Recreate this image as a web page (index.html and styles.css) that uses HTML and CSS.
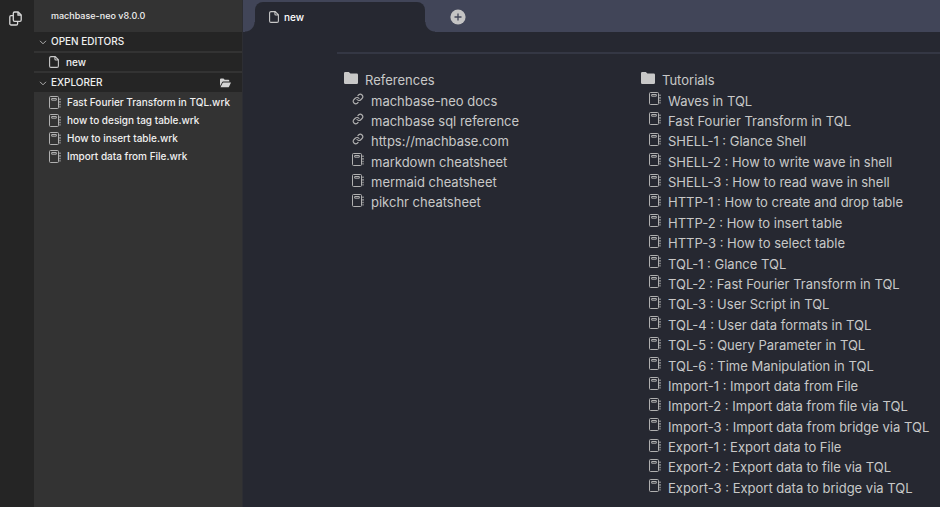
FILE: index.html
```
<!DOCTYPE html>
<html lang="en">
<head>
<meta charset="utf-8">
<meta name="viewport" content="width=device-width, initial-scale=1">
<title>machbase-neo</title>
<link rel="stylesheet" href="styles.css">
</head>
<body>
<svg class="sprite" aria-hidden="true">
  <symbol id="book" viewBox="0 0 12 13"><path d="M1.500.5h7a1 1 0 0 1 1 1v10a1 1 0 0 1-1 1h-7a1 1 0 0 1-1-1v-10a1 1 0 0 1 1-1zM2.700 2.500h4.600v1.700H2.700z" fill="none" stroke="currentColor"/><path d="M11 2.500v9" fill="none" stroke="currentColor" stroke-width="1.200" stroke-dasharray="1.600 1"/></symbol>
  <symbol id="file" viewBox="0 0 10 12"><path d="M2 .6h4.200l3.200 3.200V10a1.400 1.400 0 0 1-1.400 1.400H2A1.400 1.400 0 0 1 .6 10V2A1.400 1.400 0 0 1 2 .6zM5.900.8V3a1 1 0 0 0 1 1h2.300" fill="none" stroke="currentColor" stroke-width="1.100"/></symbol>
  <symbol id="link" viewBox="0 0 24 24"><path d="M10 13a5 5 0 0 0 7.500.5l3-3a5 5 0 0 0-7-7l-1.700 1.700M14 11a5 5 0 0 0-7.500-.5l-3 3a5 5 0 0 0 7 7l1.700-1.700" fill="none" stroke="currentColor" stroke-width="2.300" stroke-linecap="round"/></symbol>
  <symbol id="folder" viewBox="0 0 14 12"><path d="M1.300 0h3.500l1.600 1.500h6.300A1.300 1.300 0 0 1 14 2.800v7.900a1.300 1.300 0 0 1-1.300 1.300H1.300A1.300 1.300 0 0 1 0 10.700V1.300A1.300 1.300 0 0 1 1.300 0z" fill="currentColor"/></symbol>
  <symbol id="chevron" viewBox="0 0 8 5"><path d="M1 .8l3 3 3-3" fill="none" stroke="currentColor"/></symbol>
</svg>
<div class="app">
  <nav class="rail" aria-label="Activity">
    <button class="rail-button" type="button" aria-label="Explorer">
      <svg width="13" height="15" viewBox="0 0 13 15" fill="none" stroke="currentColor" stroke-width="1.300" stroke-linejoin="round"><path d="M5.600 1h3.600l3 3v5a1.300 1.300 0 0 1-1.300 1.300H5.600A1.300 1.300 0 0 1 4.300 9V2.300A1.300 1.300 0 0 1 5.600 1zM9 1v3.200h3.200M4.300 4.700H2A1.200 1.200 0 0 0 .8 5.900v6.800A1.300 1.300 0 0 0 2.100 14h5.200a1.300 1.300 0 0 0 1.300-1.300v-2.400"/></svg>
    </button>
  </nav>
  <aside class="sidebar">
    <div class="product">machbase-neo v8.0.0</div>
    <div class="section">
      <button class="section-title" type="button"><svg class="chevron"><use href="#chevron"/></svg>OPEN EDITORS</button>
    </div>
    <a class="open-file" href="#new"><svg class="file-icon"><use href="#file"/></svg>new</a>
    <div class="section">
      <button class="section-title" type="button"><svg class="chevron"><use href="#chevron"/></svg>EXPLORER</button>
      <button class="section-action" type="button" aria-label="Open folder">
        <svg width="11" height="10" viewBox="0 0 11 10" fill="currentColor"><path d="M0 8V1.500A1 1 0 0 1 1 .6h2.500l1.200 1.200h3.600a1 1 0 0 1 1 1v.8H3.200a1.400 1.400 0 0 0-1.200.8zM.5 9.300l2.100-4.200a1 1 0 0 1 .8-.5H11L9 8.700a1 1 0 0 1-.9.6z"/></svg>
      </button>
    </div>
    <ul class="files">
      <li><a href="#f1"><svg class="book"><use href="#book"/></svg>Fast Fourier Transform in TQL.wrk</a></li>
      <li><a href="#f2"><svg class="book"><use href="#book"/></svg>how to design tag table.wrk</a></li>
      <li><a href="#f3"><svg class="book"><use href="#book"/></svg>How to insert table.wrk</a></li>
      <li><a href="#f4"><svg class="book"><use href="#book"/></svg>Import data from File.wrk</a></li>
    </ul>
  </aside>
  <main class="main">
    <div class="tabs">
      <button class="tab" type="button"><svg class="file-icon"><use href="#file"/></svg>new</button>
      <button class="add" type="button" aria-label="New tab">
        <svg width="16" height="16" viewBox="0 0 16 16"><circle cx="8" cy="8" r="7.600" fill="#c4c4c4"/><path d="M8 4.500v7M4.500 8h7" stroke="#414558" stroke-width="1.300"/></svg>
      </button>
    </div>
    <div class="content">
      <section class="group">
        <h2><svg class="folder"><use href="#folder"/></svg>References</h2>
        <a href="#r1"><svg class="link"><use href="#link"/></svg>machbase-neo docs</a>
        <a href="#r2"><svg class="link"><use href="#link"/></svg>machbase sql reference</a>
        <a href="#r3"><svg class="link"><use href="#link"/></svg>https://machbase.com</a>
        <a href="#r4"><svg class="book"><use href="#book"/></svg>markdown cheatsheet</a>
        <a href="#r5"><svg class="book"><use href="#book"/></svg>mermaid cheatsheet</a>
        <a href="#r6"><svg class="book"><use href="#book"/></svg>pikchr cheatsheet</a>
      </section>
      <section class="group">
        <h2><svg class="folder"><use href="#folder"/></svg>Tutorials</h2>
        <a href="#t1"><svg class="book"><use href="#book"/></svg>Waves in TQL</a>
        <a href="#t2"><svg class="book"><use href="#book"/></svg>Fast Fourier Transform in TQL</a>
        <a href="#t3"><svg class="book"><use href="#book"/></svg>SHELL-1 : Glance Shell</a>
        <a href="#t4"><svg class="book"><use href="#book"/></svg>SHELL-2 : How to write wave in shell</a>
        <a href="#t5"><svg class="book"><use href="#book"/></svg>SHELL-3 : How to read wave in shell</a>
        <a href="#t6"><svg class="book"><use href="#book"/></svg>HTTP-1 : How to create and drop table</a>
        <a href="#t7"><svg class="book"><use href="#book"/></svg>HTTP-2 : How to insert table</a>
        <a href="#t8"><svg class="book"><use href="#book"/></svg>HTTP-3 : How to select table</a>
        <a href="#t9"><svg class="book"><use href="#book"/></svg>TQL-1 : Glance TQL</a>
        <a href="#t10"><svg class="book"><use href="#book"/></svg>TQL-2 : Fast Fourier Transform in TQL</a>
        <a href="#t11"><svg class="book"><use href="#book"/></svg>TQL-3 : User Script in TQL</a>
        <a href="#t12"><svg class="book"><use href="#book"/></svg>TQL-4 : User data formats in TQL</a>
        <a href="#t13"><svg class="book"><use href="#book"/></svg>TQL-5 : Query Parameter in TQL</a>
        <a href="#t14"><svg class="book"><use href="#book"/></svg>TQL-6 : Time Manipulation in TQL</a>
        <a href="#t15"><svg class="book"><use href="#book"/></svg>Import-1 : Import data from File</a>
        <a href="#t16"><svg class="book"><use href="#book"/></svg>Import-2 : Import data from file via TQL</a>
        <a href="#t17"><svg class="book"><use href="#book"/></svg>Import-3 : Import data from bridge via TQL</a>
        <a href="#t18"><svg class="book"><use href="#book"/></svg>Export-1 : Export data to File</a>
        <a href="#t19"><svg class="book"><use href="#book"/></svg>Export-2 : Export data to file via TQL</a>
        <a href="#t20"><svg class="book"><use href="#book"/></svg>Export-3 : Export data to bridge via TQL</a>
      </section>
    </div>
  </main>
</div>
</body>
</html>
```
FILE: styles.css
```
* { box-sizing: border-box; }

body {
  margin: 0;
  background: #262831;
  color: #c8c8c8;
  font-family: Inter, sans-serif;
  font-size: 13px;
}

button {
  border: 0;
  padding: 0;
  background: none;
  color: inherit;
  font: inherit;
}

a { color: inherit; text-decoration: none; }

svg { display: block; flex: none; }

.sprite { position: absolute; width: 0; height: 0; }

.app {
  display: grid;
  grid-template-columns: 34px 209px 1fr;
  min-height: 100vh;
}

.rail { background: #252525; padding: 11px 9px; color: #d8d8d8; }
.rail-button { display: block; }

.sidebar {
  background: #333333;
  border-right: 1px solid #2d2e33;
  color: #f0f0f0;
  font-size: 10px;
  font-weight: 500;
  white-space: nowrap;
}

.product {
  padding-left: 17px;
  font-size: 9px;
  line-height: 32px;
}

.section {
  display: flex;
  align-items: center;
  justify-content: space-between;
  height: 19px;
  padding: 0 11px 2px 5px;
  background: #252525;
}

.section-title { display: flex; align-items: center; gap: 4px; }
.section-action { padding-top: 2px; color: #d4d4d4; }
.chevron { width: 8px; height: 5px; margin-top: 4px; color: #b0b0b0; }

.open-file {
  display: flex;
  align-items: center;
  gap: 7px;
  height: 22px;
  padding-left: 15px;
  border: solid #333333;
  border-width: 2px 0;
  background: #252525;
}

.file-icon { width: 10px; height: 12px; color: #c8c8c8; }
.book { width: 12px; height: 13px; color: #b0b0b0; }
.link { width: 12px; height: 12px; color: #b0b0b0; }
.folder { width: 14px; height: 12px; }

.files { margin: 0; padding: 1px 0 0; list-style: none; }

.files a {
  display: flex;
  align-items: center;
  gap: 6px;
  height: 18px;
  padding-left: 15px;
}

.files a + a { margin-top: 1px; }

.main { display: flex; flex-direction: column; min-width: 0; }

.tabs {
  display: flex;
  align-items: flex-end;
  height: 32px;
  padding-left: 12px;
  background: #414558;
}

.tab {
  position: relative;
  display: flex;
  align-items: center;
  gap: 5px;
  width: 170px;
  height: 30px;
  padding-left: 14px;
  border-radius: 8px 8px 0 0;
  background: #262831;
  color: #ffffff;
  font-size: 10px;
  font-weight: 500;
}

/* Concave feet joining the tab to the page below */
.tab::before,
.tab::after {
  content: "";
  position: absolute;
  bottom: 0;
  width: 10px;
  height: 10px;
}

.tab::before { right: 100%; background: radial-gradient(circle at 0 0, transparent 9px, #262831 10px); }
.tab::after { left: 100%; background: radial-gradient(circle at 100% 0, transparent 9px, #262831 10px); }

.add { margin: 0 0 7px 25px; }

.content {
  flex: 1;
  display: grid;
  grid-template-columns: 297px 1fr;
  margin: 20px 0 0 94px;
  padding: 16px 0 9px 7px;
  border-top: 2px solid #343744;
}

.group {
  display: grid;
  grid-template-rows: repeat(21, 1fr);
  white-space: nowrap;
}

.group h2,
.group a {
  display: flex;
  align-items: center;
  margin: 0;
  font-size: 13px;
  font-weight: 400;
  line-height: 20px;
}

.group h2 { gap: 7px; }
.group a { gap: 7px; padding-left: 8px; }
.group svg { margin-bottom: 4px; }
```
